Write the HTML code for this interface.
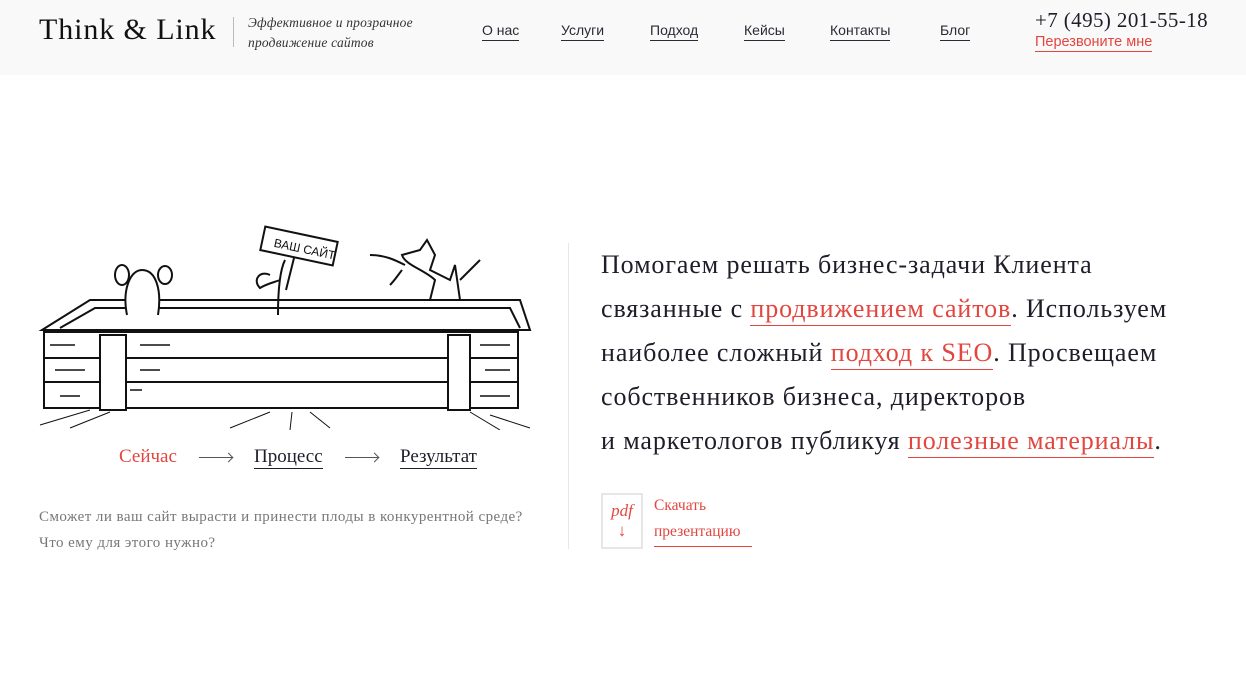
<!DOCTYPE html>
<html><head><meta charset="utf-8"><style>
*{margin:0;padding:0;box-sizing:border-box}
body{width:1246px;height:695px;background:#fff;position:relative;overflow:hidden;font-family:"Liberation Serif",serif;color:#1e1e2a}
.hdr{position:absolute;left:0;top:0;width:1246px;height:75px;background:#f9f9f9}
.a{position:absolute;white-space:nowrap}
.nav{font-family:"Liberation Sans",sans-serif;font-size:14px;color:#2a2a35;top:22px;border-bottom:1px solid #2a2a35;line-height:17px;padding-bottom:1px}
.red{color:#e2463f}
.u{border-bottom:1px solid #e2463f}
.main{left:601px;top:243px;font-size:26px;letter-spacing:0.9px;line-height:44px;color:#1e1e2a}
.main span{color:#e2463f;border-bottom:1px solid #e2463f;padding-bottom:2px}
.arr{position:absolute;height:1px;background:#555;width:33px}
.arr:after{content:"";position:absolute;right:0;top:-3px;width:6px;height:6px;border-top:1px solid #555;border-right:1px solid #555;transform:rotate(45deg);transform-origin:center}
</style></head><body>
<div class="hdr"></div>
<div class="a" style="left:39px;top:13px;font-size:30px;color:#111;letter-spacing:0.9px">Think &amp; Link</div>
<div class="a" style="left:233px;top:17px;width:1px;height:30px;background:#bbb"></div>
<div class="a" style="left:248px;top:13px;font-size:13.5px;font-style:italic;line-height:20px;color:#333;letter-spacing:0.2px">Эффективное и прозрачное<br>продвижение сайтов</div>
<div class="a nav" style="left:482px">О нас</div>
<div class="a nav" style="left:561px">Услуги</div>
<div class="a nav" style="left:650px">Подход</div>
<div class="a nav" style="left:744px">Кейсы</div>
<div class="a nav" style="left:830px">Контакты</div>
<div class="a nav" style="left:940px">Блог</div>
<div class="a" style="left:1035px;top:8px;font-size:21px;letter-spacing:0.4px;color:#1e1e2a">+7 (495) 201-55-18</div>
<div class="a red u" style="left:1035px;top:34px;font-family:'Liberation Sans',sans-serif;font-size:14.5px;line-height:17px">Перезвоните мне</div>

<svg class="a" style="left:30px;top:220px" width="520" height="210" viewBox="0 0 520 210" fill="none" stroke="#111" stroke-width="2">
<path d="M12 110 L60 80 L490 80 L500 110 Z"/>
<path d="M30 108 L65 88 L480 88 L490 108"/>
<rect x="14" y="112" width="474" height="26"/>
<rect x="14" y="138" width="474" height="24"/>
<rect x="14" y="162" width="474" height="26"/>
<rect x="70" y="115" width="26" height="75" fill="#fff"/>
<rect x="418" y="115" width="22" height="75" fill="#fff"/>
<path d="M20 125h25M25 150h30M30 176h20M110 125h30M110 150h20M450 125h30M455 150h25M450 176h30M100 170h12" stroke-width="1.5"/>
<path d="M10 205 L60 190M40 208 L80 192M200 208 L240 192M260 210 L262 192M300 208 L280 192M460 195 L500 208M440 192 L470 210" stroke-width="1"/>
<path d="M97 95 C92 70 100 50 112 50 C126 50 132 70 128 95" fill="#fff"/>
<ellipse cx="92" cy="55" rx="7" ry="10"/><ellipse cx="135" cy="55" rx="7" ry="9"/>
<path d="M248 95 C248 70 250 50 255 40 M240 55 C230 50 222 60 230 68 C236 64 245 62 250 60"/>
<path d="M256 70 L266 30"/>
<rect x="232" y="14" width="74" height="24" transform="rotate(12 269 26)" fill="#fff"/>
<text x="244" y="32" transform="rotate(12 269 26)" font-family="Liberation Sans,sans-serif" font-size="12" fill="#111" stroke="none">ВАШ САЙТ</text>
<path d="M400 80 L405 60 C395 50 375 45 372 35 L390 30 L397 20 L405 35 L400 50 L420 60 L425 45 L430 80"/>
<path d="M340 35 C355 35 365 40 375 45M360 65 C365 60 368 55 372 50M430 60 C440 50 445 45 450 40"/>
</svg>

<div class="a red" style="left:119px;top:446px;font-size:19px">Сейчас</div>
<div class="arr" style="left:199px;top:457px"></div>
<div class="a" style="left:254px;top:446px;font-size:19px;border-bottom:1px solid #1e1e2a;line-height:22px">Процесс</div>
<div class="arr" style="left:345px;top:457px"></div>
<div class="a" style="left:400px;top:446px;font-size:19px;border-bottom:1px solid #1e1e2a;line-height:22px">Результат</div>
<div class="a" style="left:39px;top:504px;font-size:15px;letter-spacing:0.45px;line-height:26px;color:#777">Сможет ли ваш сайт вырасти и принести плоды в конкурентной среде?<br>Что ему для этого нужно?</div>

<div class="a" style="left:568px;top:243px;width:1px;height:306px;background:#e8e8e8"></div>
<div class="a main">Помогаем решать бизнес-задачи Клиента<br>связанные с <span>продвижением сайтов</span>. Используем<br>наиболее сложный <span>подход к SEO</span>. Просвещаем<br>собственников бизнеса, директоров<br>и маркетологов публикуя <span>полезные материалы</span>.</div>

<div class="a" style="left:601px;top:493px;width:42px;height:56px;border:2px solid #e6e6e6;text-align:center;color:#e2463f;font-style:italic;font-size:17px;line-height:20px;padding-top:6px">pdf<br><span style="font-style:normal">↓</span></div>
<div class="a red" style="left:654px;top:493px;font-size:15.5px;line-height:26px">Скачать<br><span style="border-bottom:1px solid #e2463f;padding-bottom:6px;padding-right:12px">презентацию</span></div>
</body></html>
